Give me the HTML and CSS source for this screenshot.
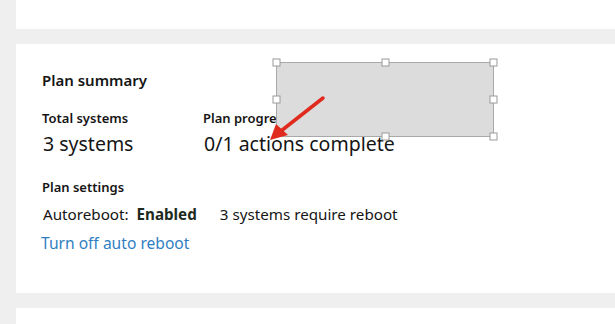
FILE: index.html
```html
<!DOCTYPE html>
<html>
<head>
<meta charset="utf-8">
<link rel="stylesheet" href="styles.css">
</head>
<body>
<div class="page">
  <div class="card card-top"></div>
  <div class="card card-main">
    <h2 class="title">Plan summary</h2>
    <div class="stats">
      <div class="stat">
        <div class="label">Total systems</div>
        <div class="value">3 systems</div>
      </div>
      <div class="stat">
        <div class="label">Plan progress</div>
        <div class="value">0/1 actions complete</div>
      </div>
    </div>
    <div class="label settings-label">Plan settings</div>
    <div class="settings-row">
      <span>Autoreboot: <b class="enabled">Enabled</b></span>
      <span>3 systems require reboot</span>
    </div>
    <a class="link" href="#">Turn off auto reboot</a>
  </div>
  <div class="card card-bottom"></div>
</div>
<svg class="annotation" width="615" height="324" viewBox="0 0 615 324">
  <rect x="276.5" y="62.5" width="217" height="74" fill="#dcdcdc" stroke="#a9a9a9" stroke-width="1"/>
  <g fill="#fff" stroke="#9a9a9a" stroke-width="1">
    <rect x="273" y="59" width="7" height="7"/>
    <rect x="382" y="59" width="7" height="7"/>
    <rect x="490" y="59" width="7" height="7"/>
    <rect x="273" y="96" width="7" height="7"/>
    <rect x="490" y="96" width="7" height="7"/>
    <rect x="382" y="133" width="7" height="7"/>
    <rect x="490" y="133" width="7" height="7"/>
  </g>
  <line x1="323" y1="98" x2="281" y2="131" stroke="#e02a1e" stroke-width="3.5" stroke-linecap="round"/>
  <polygon points="270,140 276,124 288,135" fill="#e02a1e"/>
</svg>
</body>
</html>
```
FILE: styles.css
```css
html, body {
  margin: 0;
  padding: 0;
}
body {
  background: #efefef;
  font-family: "Noto Sans", "Open Sans", sans-serif;
  color: #151515;
  width: 615px;
  height: 324px;
  overflow: hidden;
  position: relative;
}
.page {
  padding-left: 16px;
  display: flex;
  flex-direction: column;
  gap: 15px;
}
.card {
  background: #fff;
}
.card-top {
  height: 29px;
}
.card-main {
  height: 249px;
  box-sizing: border-box;
  padding: 26px 0 0 26px;
  display: flex;
  flex-direction: column;
  align-items: flex-start;
}
.card-bottom {
  height: 30px;
}
.title {
  margin: 0;
  font-size: 15px;
  font-weight: 600;
  line-height: 20px;
}
.stats {
  display: grid;
  grid-template-columns: 161px auto;
  margin-top: 19px;
}
.label {
  font-size: 13px;
  font-weight: 600;
  line-height: 18px;
}
.value {
  margin-top: 5px;
  font-size: 19.5px;
  line-height: 24px;
  padding-left: 1px;
}
.settings-label {
  margin-top: 22px;
}
.settings-row {
  margin-top: 8px;
  font-size: 15.2px;
  line-height: 20px;
  display: flex;
  gap: 23px;
  padding-left: 1px;
}
.enabled {
  font-weight: 700;
  color: #1e2b1e;
  margin-left: 4px;
}
.link {
  margin-top: 9px;
  font-size: 15.6px;
  line-height: 20px;
  color: #2f7ec2;
  text-decoration: none;
  margin-left: -1px;
}
.annotation {
  position: absolute;
  left: 0;
  top: 0;
}
```
